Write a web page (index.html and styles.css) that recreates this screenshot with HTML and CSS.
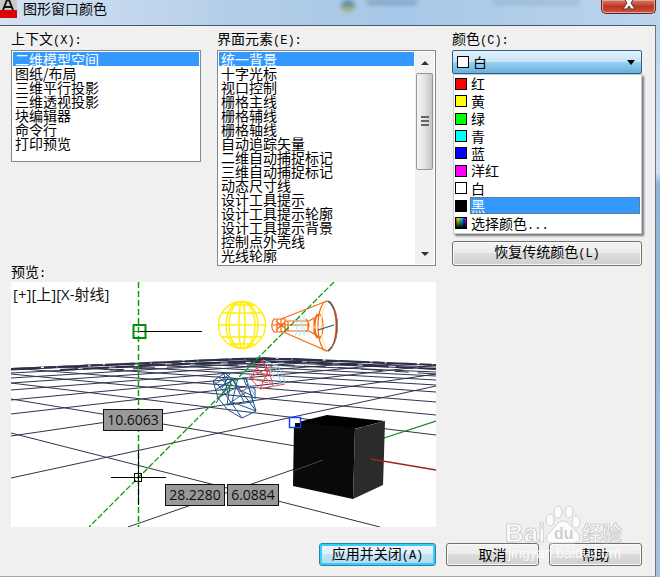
FILE: index.html
```html
<!DOCTYPE html>
<html lang="zh-CN">
<head>
<meta charset="utf-8">
<meta name="viewport" content="width=device-width, initial-scale=1">
<title>图形窗口颜色</title>
<link rel="stylesheet" href="styles.css">
</head>
<body>
<div class="window">
  <header class="titlebar">
    <svg class="app-icon" width="17" height="18" viewBox="0 0 17 18" aria-hidden="true">
      <rect width="17" height="10" fill="#c9c9c9"/>
      <rect y="10" width="17" height="8" fill="#d90505"/>
      <path d="M3 10 7 0h2l4 10M5 7h6" fill="none" stroke="#111" stroke-width="2"/>
    </svg>
    <h1 class="title">图形窗口颜色</h1>
    <span class="glass-icon"></span>
    <span class="glass-text"></span>
    <span class="glass-text glass-text-far"></span>
    <button class="close" type="button" aria-label="关闭">
      <svg width="16" height="14" viewBox="0 0 16 14" aria-hidden="true">
        <path d="M2 0h4l2 3 2-3h4l-4 6 4 6h-4L8 9l-2 3H2l4-6z" fill="#fff" stroke="#5b3030"/>
      </svg>
    </button>
  </header>

  <main class="dialog">
    <div class="columns">
      <section class="field">
        <label class="caption" for="context">上下文<span class="key">(X):</span></label>
        <select class="list context" id="context" size="7">
          <option selected>二维模型空间</option>
          <option>图纸/布局</option>
          <option>三维平行投影</option>
          <option>三维透视投影</option>
          <option>块编辑器</option>
          <option>命令行</option>
          <option>打印预览</option>
        </select>
      </section>

      <section class="field">
        <label class="caption" for="element">界面元素<span class="key">(E):</span></label>
        <div class="scroll-list">
          <select class="list bare" id="element" size="15">
            <option selected>统一背景</option>
            <option>十字光标</option>
            <option>视口控制</option>
            <option>栅格主线</option>
            <option>栅格辅线</option>
            <option>栅格轴线</option>
            <option>自动追踪矢量</option>
            <option>二维自动捕捉标记</option>
            <option>三维自动捕捉标记</option>
            <option>动态尺寸线</option>
            <option>设计工具提示</option>
            <option>设计工具提示轮廓</option>
            <option>设计工具提示背景</option>
            <option>控制点外壳线</option>
            <option>光线轮廓</option>
          </select>
          <div class="scrollbar">
            <button class="arrow" type="button" aria-label="向上滚动"><svg width="8" height="4" viewBox="0 0 8 4"><path d="M0 4 4 0l4 4z" fill="#333"/></svg></button>
            <div class="track"><div class="thumb"><i></i><i></i><i></i></div></div>
            <button class="arrow" type="button" aria-label="向下滚动"><svg width="8" height="4" viewBox="0 0 8 4"><path d="M0 0l4 4 4-4z" fill="#333"/></svg></button>
          </div>
        </div>
      </section>

      <section class="field">
        <label class="caption" for="color">颜色<span class="key">(C):</span></label>
        <div class="combo">
          <span class="swatch white"></span>
          <select class="combo-select" id="color"><option>白</option></select>
          <svg class="combo-arrow" width="8" height="5" viewBox="0 0 8 5" aria-hidden="true"><path d="M0 0h8L4 5z"/></svg>
          <ul class="popup" role="listbox" aria-label="颜色">
            <li role="option"><span class="swatch red"></span><span class="name">红</span></li>
            <li role="option"><span class="swatch yellow"></span><span class="name">黄</span></li>
            <li role="option"><span class="swatch green"></span><span class="name">绿</span></li>
            <li role="option"><span class="swatch cyan"></span><span class="name">青</span></li>
            <li role="option"><span class="swatch blue"></span><span class="name">蓝</span></li>
            <li role="option"><span class="swatch magenta"></span><span class="name">洋红</span></li>
            <li role="option"><span class="swatch white"></span><span class="name">白</span></li>
            <li role="option" aria-selected="true"><span class="swatch black"></span><span class="name active">黑</span></li>
            <li role="option"><span class="swatch rainbow"></span><span class="name">选择颜色<span class="key">...</span></span></li>
          </ul>
        </div>
        <button class="button restore" type="button">恢复传统颜色<span class="key">(L)</span></button>
      </section>

      <section class="preview">
        <h2 class="caption">预览<span class="key">:</span></h2>
        <svg class="scene" viewBox="11 281 425 245" role="img" aria-label="预览">
          <clipPath id="ground"><path d="M11 367 238 357 265 356 436 363V526H11z"/></clipPath>
          <rect x="11" y="281" width="425" height="245" fill="#fff"/>
          <g class="grid" clip-path="url(#ground)">
            <path d="M11 432 380 526M11 398 320 449M11 382 436 434M11 373 436 414M11 367 436 401M11 362 436 391M11 359 436 384M11 356 436 379M11 354 436 375M11 353 436 371M11 351 436 368M11 350 436 366M11 349 436 364"/>
            <path d="M11 477 436 385M11 435 436 373M11 413 436 364M11 399 436 359M11 389 436 356M11 382 436 353M11 377 436 351M11 372 436 350M11 369 436 348M11 367 436 347"/>
            <path d="M128 526 384 437"/>
          </g>
          <path class="horizon" d="M11 368 150 362 238 358 290 358 436 364"/>
          <path class="horizon far" d="M60 369 160 364 238 361 300 361 436 368"/>
          <path class="horizon near" d="M110 369 190 365 260 364 330 366 436 373"/>
          <path d="M384 437 436 420" stroke="#138a13" stroke-width="1.300"/>

          <g fill="none" stroke="#ffee08" stroke-width="1.4">
            <circle cx="242" cy="324" r="23.5"/>
            <ellipse cx="242" cy="324" rx="16" ry="23.5"/>
            <ellipse cx="242" cy="324" rx="13" ry="23.5"/>
            <ellipse cx="242" cy="324" rx="3" ry="23.5"/>
            <path d="M222 312h40M218 324h48M222 336h40M230 304h24M230 343h24" />
          </g>

          <g fill="none" stroke="#f26a16" stroke-width="1.200">
            <path d="M281 318 327 300M281 330 327 350"/>
            <ellipse cx="327" cy="325" rx="9" ry="25"/>
            <path d="M274 318h11v13h-11c-3-3-3-10 0-13zM272 324h37M277 318v13M281 318v13M276 320l10 8M276 329l10-9M286 320h22v10h-22M288 320v10M306 318c4 4 4 9 0 13M309 320 319 314M309 330 321 337"/>
            <ellipse cx="319" cy="325" rx="4" ry="12"/>
            <path d="M314 318v15M317 313c-4 8-4 18 0 24"/>
          </g>
          <path d="M311 326h14M327 301c-8 12-8 36 0 48" fill="none" stroke="#ffe68a"/>
          <path d="M295 318c3 4 3 13 0 17M299 315c3 6 3 16 0 20M304 314v20" fill="none" stroke="#a8e1f3"/>
          <path d="M328 300c12 9 12 41 0 50M318 329l16-5" fill="none" stroke="#25508c" stroke-width="1.3"/>
          <path d="M330 300c10 13 10 37 0 49" fill="none" stroke="#e8682c"/>

          <g fill="none" stroke="#e54850">
            <path d="M262 359 250 377 260 388 273 385 269 369zM257 367l16 18M251 376l23-12M260 388l9-20M262 359l6 15M239 391l14-6M250 377l18 5M255 371l15 3M260 388l25-5"/>
            <path d="M250 374l-4 8M260 387l-15-4M263 359l15 6 7 16-14 5M274 363l7 18M266 361l8 16" stroke="#9bcbe0"/>
          </g>
          <g fill="none" stroke="#1d548b">
            <path d="M213 380l12-8 8 7-13 7zM213 380l5 17 10 12 14 8 14-7-10-33-15 2-15 23M220 386l22 31M231 379l-4 25 19-13M238 377l-6 24 24 9M246 377l7 24-26 3M233 379l23 31M215 389l18-10 11 22M224 373l4 20M218 397l17-10 18 8M217 375l10 8M214 384l16-11M229 375l-7 12M243 376l3 8 9 4v10"/>
            <path d="M247 381l8 14M235 399l14-15" stroke="#78abd0"/>
          </g>

          <g>
            <path d="M294 422 327 414 385 420 354 428z" fill="#000"/>
            <path d="M294 421 355 427 353 498 293 485z" fill="#090909"/>
            <path d="M355 428 385 420 383 484 353 498z" fill="#2b2b2b"/>
            <path d="M293 470 323 459" stroke="#3b3f5c" stroke-width="1.300"/>
            <path d="M371 458 436 469" stroke="#a02222" stroke-width="1.300"/>
          </g>
          <rect x="289.500" y="416.500" width="11" height="10" fill="#fff" stroke="#1640ff" stroke-width="1.500"/>
          <path d="M295 426v-4h5v4z" fill="#090909"/>

          <g fill="none" stroke="#0aa00a">
            <path d="M138.500 281V526" stroke-width="1.500" stroke-dasharray="6 3"/>
            <path d="M334 281 89 526" stroke-width="1.300" stroke-dasharray="6 2"/>
            <rect x="133.500" y="324" width="12" height="13" stroke="#088d08" stroke-width="2"/>
            <path d="M134 330.500h11"/>
          </g>
          <path d="M140 330.500H202M111 476.500H166M138.500 450V504" stroke="#000"/>
          <rect x="134.500" y="472.500" width="7" height="8" fill="none" stroke="#000"/>

          <g class="tip-box">
            <rect x="103.500" y="408.500" width="59" height="21"/>
            <rect x="165.500" y="483.500" width="59" height="21"/>
            <rect x="227.500" y="483.500" width="51" height="21"/>
          </g>
          <g class="tip-text">
            <text x="133" y="424">10.6063</text>
            <text x="195" y="499">28.2280</text>
            <text x="253" y="499">6.0884</text>
          </g>
          <text class="view-label" x="13" y="299">[+][上][X-射线]</text>
        </svg>
      </section>
    </div>

    <footer class="actions">
      <button class="button primary" type="button">应用并关闭<span class="key">(A)</span></button>
      <button class="button" type="button">取消</button>
      <button class="button" type="button">帮助</button>
    </footer>

    <svg class="watermark" width="130" height="62" viewBox="0 0 130 62" aria-hidden="true">
      <g fill="#fff" stroke="#c6c6c6" stroke-width="1">
        <text class="brand" x="5" y="37">Bai</text>
        <ellipse cx="50" cy="15" rx="4" ry="6"/>
        <ellipse cx="58" cy="7" rx="4" ry="6"/>
        <ellipse cx="69" cy="7" rx="4" ry="6"/>
        <ellipse cx="76" cy="17" rx="4" ry="6"/>
        <path d="M63 16c-6 0-8 7-13 11-7 7-2 12 4 11h19c7 0 9-7 3-12-5-4-7-10-13-10z"/>
        <text class="brand-zh" x="82" y="36">经验</text>
      </g>
      <text class="brand-du" x="54" y="34">du</text>
      <text class="brand-url" x="8" y="53">jingyan.baidu.com</text>
    </svg>
  </main>
</div>
</body>
</html>
```
FILE: styles.css
```css
* {
  box-sizing: border-box;
}

body {
  margin: 0;
  font-family: "Noto Sans CJK SC", sans-serif;
  font-size: 14px;
  line-height: 14px;
  color: #000;
}

.window {
  min-height: 100vh;
  display: flex;
  flex-direction: column;
  padding: 0 4px 0 0;
  background: linear-gradient(#b7d2ec, #cfe0f3 30%, #8fb5d6 32%, #a5c3df);
}

.titlebar {
  display: flex;
  align-items: flex-start;
  height: 25px;
  margin-right: -4px;
  padding-right: 4px;
  background: linear-gradient(90deg, #d4e3f3, #b4cee8 35%, #a6c8e8 60%, #bdd4ec);
}

.app-icon {
  flex: none;
}

.title {
  flex: 1;
  margin: 0 0 0 6px;
  font-size: 14px;
  line-height: 16px;
  font-weight: 400;
}

.glass-icon {
  width: 14px;
  height: 12px;
  margin-right: 12px;
  border-radius: 50%;
  background: linear-gradient(#3c78ad, #bdbb72);
  filter: blur(2px);
}

.glass-text {
  width: 50px;
  height: 5px;
  margin-right: 76px;
  background: #6b89a7;
  opacity: 0.6;
  filter: blur(2px);
}

.glass-text-far {
  width: 86px;
  margin-right: 22px;
  opacity: 0.3;
}

.close {
  width: 55px;
  height: 14px;
  padding: 0;
  border: 1px solid #56282b;
  border-top: 0;
  border-radius: 0 0 5px 5px;
  background: linear-gradient(#d0806f, #bd3422 50%, #d0533b);
  box-shadow: inset 0 0 0 1px #e7a494;
  line-height: 0;
}

.close svg {
  margin-top: -5px;
}

.dialog {
  flex: 1;
  position: relative;
  padding: 6px 13px 10px 11px;
  background: #f0f0f0;
  border-top: 1px solid #4b5866;
  border-right: 1px solid #66788c;
  border-bottom: 1px solid #9fa8b5;
}

.columns {
  display: grid;
  grid-template-columns: 190fr 219fr 190fr;
  column-gap: 16px;
}

.field {
  display: flex;
  flex-direction: column;
}

.caption {
  display: block;
  height: 18px;
  margin: 0;
  font-size: 14px;
  font-weight: 400;
  line-height: 12px;
}

.key {
  font-family: "Liberation Mono", monospace;
  font-size: 12px;
}

.list {
  width: 100%;
  margin: 0;
  padding: 1px;
  border: 1px solid #828790;
  border-radius: 0;
  outline: 0;
  overflow: hidden;
  background: #fff;
  font: 14px/14px "Noto Sans CJK SC", sans-serif;
  color: #000;
}

.list option {
  display: flex;
  align-items: center;
  height: 14px;
  min-height: 14px;
  padding: 0 2px;
  line-height: 14px;
}

.list option:checked {
  background: #3399ff linear-gradient(#3399ff, #3399ff);
  color: #fff;
}

.context {
  height: 112px;
}

.scroll-list {
  display: flex;
  height: 216px;
  padding: 1px;
  border: 1px solid #828790;
  background: #fff;
}

.bare {
  flex: 1;
  width: auto;
  padding: 0;
  border: 0;
}

.scrollbar {
  display: flex;
  flex-direction: column;
  width: 19px;
  margin-left: 1px;
  background: #f1f1f1;
}

.arrow {
  height: 21px;
  padding: 0;
  border: 0;
  background: none;
  line-height: 0;
}

.track {
  flex: 1;
}

.thumb {
  display: flex;
  flex-direction: column;
  align-items: center;
  justify-content: center;
  gap: 2px;
  height: 57%;
  margin: 0 1px;
  border: 1px solid #979797;
  border-radius: 2px;
  background: linear-gradient(90deg, #f5f5f5, #e3e3e3 50%, #c4c4c8);
}

.thumb i {
  width: 8px;
  height: 2px;
  background: #666;
}

.combo {
  position: relative;
  display: flex;
  align-items: center;
  height: 24px;
  padding: 0 6px 0 4px;
  border: 1px solid #2c628b;
  border-radius: 2px;
  background: linear-gradient(#e4f2fb, #c5e4f6 48%, #98d1ef 50%, #69b0dc);
}

.combo-select {
  flex: 1;
  height: 20px;
  margin: 0;
  padding: 0 0 3px 4px;
  border: 0;
  outline: 0;
  appearance: none;
  background: none;
  font: 14px/20px "Noto Sans CJK SC", sans-serif;
  color: #000;
}

.swatch {
  flex: none;
  width: 12px;
  height: 12px;
  border: 1px solid #000;
}

.red { background: #f00; }
.yellow { background: #ff0; }
.green { background: #0f0; }
.cyan { background: #0ff; }
.blue { background: #00f; }
.magenta { background: #f0f; }
.white { background: #fff; }
.black { background: #000; }

.rainbow {
  background:
    linear-gradient(transparent, #000),
    linear-gradient(90deg, #f33, #ff0, #0f6, #0cf, #40f, #f0c);
}

.popup {
  position: absolute;
  top: 23px;
  left: 0;
  right: -1px;
  display: grid;
  grid-auto-rows: 1fr;
  height: 160px;
  margin: 0;
  padding: 0 1px 1px;
  border: 1px solid #c3cad2;
  background: #fff;
  box-shadow: 2px 2px 2px #777;
  list-style: none;
}

.popup li {
  display: flex;
  align-items: center;
  gap: 3px;
}

.name {
  flex: 1;
  height: 17px;
  padding-left: 1px;
  line-height: 16px;
}

.active {
  background: #3399ff;
  color: #fff;
  outline: 1px dotted #9a5a20;
  outline-offset: -1px;
}

.button {
  width: 93px;
  height: 23px;
  margin: 0;
  padding: 0 0 2px;
  border: 1px solid #707070;
  border-radius: 3px;
  background: linear-gradient(#f3f3f3, #ebebeb 48%, #dddddd 50%, #cfcfcf);
  box-shadow: inset 0 0 0 1px #fbfbfb;
  font: 14px/18px "Noto Sans CJK SC", sans-serif;
  color: #000;
}

.restore {
  width: auto;
  height: 25px;
  margin-top: auto;
}

.primary {
  width: 117px;
  border-color: #2b7fb0;
  background: linear-gradient(#eef8fd, #dceffa 48%, #c5e4f5 50%, #b0d8ee);
  box-shadow: inset 0 0 0 2px #37cdf8;
}

.preview {
  grid-column: 1 / 3;
}

.preview .caption {
  height: 16px;
  line-height: 10px;
}

.scene {
  display: block;
  width: 100%;
}

.grid {
  fill: none;
  stroke: #30334d;
  stroke-width: 1;
}

.horizon {
  fill: none;
  stroke: #2b2e44;
  stroke-width: 2;
  stroke-dasharray: 30 3 12 2;
}

.horizon.far {
  stroke-dasharray: 18 5 26 7;
}

.horizon.near {
  stroke-width: 1;
  stroke-dasharray: 14 9 22 12;
}

.tip-box {
  fill: #999;
  stroke: #111;
}

.tip-text {
  font: 14px "Open Sans", sans-serif;
  fill: #111;
  text-anchor: middle;
}

.view-label {
  font: 15px "Open Sans", "Noto Sans CJK SC", sans-serif;
  fill: #111;
}

.actions {
  display: flex;
  justify-content: flex-end;
  gap: 10px;
  margin-top: 16px;
}

.watermark {
  position: absolute;
  right: 25px;
  bottom: 9px;
  opacity: 0.8;
  pointer-events: none;
}

.brand {
  font: bold 26px "Liberation Sans", sans-serif;
}

.brand-zh {
  font: bold 20px "Noto Sans CJK SC", sans-serif;
}

.brand-du {
  font: bold 16px "Liberation Sans", sans-serif;
  fill: #c8c8c8;
}

.brand-url {
  font: 14px "Liberation Sans", sans-serif;
  fill: #fff;
}
```
